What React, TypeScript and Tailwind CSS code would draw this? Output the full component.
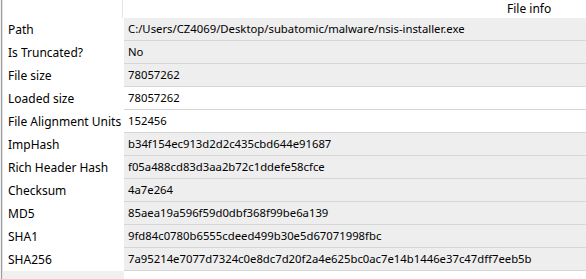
const rows: { label: string; value: string; white?: boolean }[] = [
  { label: "Path", value: "C:/Users/CZ4069/Desktop/subatomic/malware/nsis-installer.exe" },
  { label: "Is Truncated?", value: "No" },
  { label: "File size", value: "78057262" },
  { label: "Loaded size", value: "78057262", white: true },
  { label: "File Alignment Units", value: "152456", white: true },
  { label: "ImpHash", value: "b34f154ec913d2d2c435cbd644e91687" },
  { label: "Rich Header Hash", value: "f05a488cd83d3aa2b72c1ddefe58cfce" },
  { label: "Checksum", value: "4a7e264" },
  { label: "MD5", value: "85aea19a596f59d0dbf368f99be6a139" },
  { label: "SHA1", value: "9fd84c0780b6555cdeed499b30e5d67071998fbc" },
  { label: "SHA256", value: "7a95214e7077d7324c0e8dc7d20f2a4e625bc0ac7e14b1446e37c47dff7eeb5b" },
];

export default function App() {
  return (
    <div
      className="w-[586px] h-[279px] overflow-hidden bg-white text-[12px] text-black flex"
      style={{ fontFamily: '"Noto Sans", "Liberation Sans", sans-serif' }}
    >
      {/* splitter edge */}
      <div className="w-px bg-[#f0f0f0]" />
      <div className="w-px bg-[#a0a0a0]" />
      <div className="w-px bg-[#e3e3e3]" />
      <div className="flex-1 flex flex-col">
        <div className="h-[18px] flex">
          <div className="w-[120px] border-r border-[#e5e5e5]" />
          <div className="flex-1 flex items-center pl-[384px] leading-none">File info</div>
        </div>
        {rows.map((r) => (
          <div key={r.label} className="h-[23px] flex">
            <div className="w-[121px] bg-white flex items-center pl-[5px] leading-none">{r.label}</div>
            <div
              className={`flex-1 flex items-center pl-[4px] leading-none text-[11.3px] border-b border-[#d6d6d6] ${
                r.white ? "bg-white" : "bg-[#eeeeee]"
              }`}
            >
              {r.value}
            </div>
          </div>
        ))}
        <div className="flex-1 flex">
          <div className="w-[121px] bg-[#f0f0f0]" />
          <div className="flex-1 bg-white" />
        </div>
      </div>
    </div>
  );
}
